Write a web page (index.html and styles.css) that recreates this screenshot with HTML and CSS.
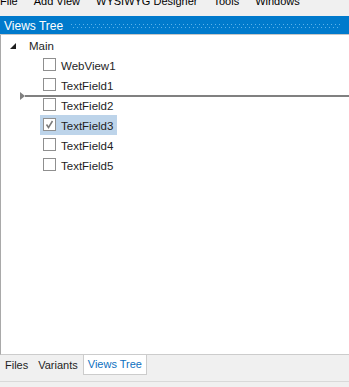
FILE: index.html
```html
<!DOCTYPE html>
<html lang="en">
<head>
    <meta charset="UTF-8">
    <title>Views Tree</title>
    <link rel="stylesheet" href="styles.css">
</head>
<body>
    <div class="menubar">
        <div class="menu-items">
            <span>File</span>
            <span>Add View</span>
            <span>WYSIWYG Designer</span>
            <span>Tools</span>
            <span>Windows</span>
        </div>
    </div>

    <div class="panel-title">
        <span class="title-text">Views Tree</span>
        <svg class="grip" height="5">
            <defs>
                <pattern id="dots" width="4" height="5" patternUnits="userSpaceOnUse">
                    <rect x="1" y="0" width="1" height="1" fill="#5fb3ea"/>
                    <rect x="3" y="3" width="1" height="1" fill="#5fb3ea"/>
                </pattern>
            </defs>
            <rect width="100%" height="5" fill="url(#dots)"/>
        </svg>
    </div>

    <div class="tree">
        <div class="row root">
            <span class="expander"></span>
            <span class="label">Main</span>
        </div>
        <div class="row child"><span class="item"><span class="check"></span><span class="label">WebView1</span></span></div>
        <div class="row child"><span class="item"><span class="check"></span><span class="label">TextField1</span></span></div>
        <div class="row child"><span class="item"><span class="check"></span><span class="label">TextField2</span></span></div>
        <div class="row child">
            <span class="item selected">
                <span class="check">
                    <svg width="11" height="11" viewBox="0 0 11 11"><path d="M2.5 5.5 L4.5 8.5 L8.5 2" fill="none" stroke="#7a7a7a" stroke-width="1.5"/></svg>
                </span>
                <span class="label">TextField3</span>
            </span>
        </div>
        <div class="row child"><span class="item"><span class="check"></span><span class="label">TextField4</span></span></div>
        <div class="row child"><span class="item"><span class="check"></span><span class="label">TextField5</span></span></div>

        <!-- drop indicator while dragging -->
        <div class="drop-line"></div>
    </div>

    <div class="tabs">
        <span class="tab">Files</span>
        <span class="tab">Variants</span>
        <span class="tab active">Views Tree</span>
    </div>
    <div class="statusline"></div>
</body>
</html>
```

FILE: styles.css
```css
html, body {
    margin: 0;
    padding: 0;
}
body {
    width: 349px;
    height: 387px;
    overflow: hidden;
    display: flex;
    flex-direction: column;
    background-color: #f0f0f0;
    font-family: 'Liberation Sans', Arial, sans-serif;
    font-size: 11.5px;
    color: #1e1e1e;
}
.menubar {
    height: 16px;
    overflow: hidden;
    flex-shrink: 0;
}
.menu-items {
    display: flex;
    gap: 16px;
    margin-top: -6px;
    line-height: 15px;
    font-size: 11px;
    color: #000;
}
.panel-title {
    height: 18px;
    flex-shrink: 0;
    display: flex;
    align-items: center;
    background-color: #007acc;
    border-bottom: 1px solid #c6c6c6;
    color: #fff;
    padding-left: 4px;
}
.title-text {
    font-size: 12px;
    line-height: 18px;
    padding-top: 1px;
}
.grip {
    flex: 1;
    margin: 2px 8px 0 7px;
}
.tree {
    flex: 1;
    position: relative;
    background-color: #fff;
    border-left: 1px solid #a9a9a9;
    border-bottom: 1px solid #cccccc;
}
.row {
    height: 20px;
    display: flex;
    align-items: center;
}
.root {
    padding-left: 9px;
}
.expander {
    width: 0;
    height: 0;
    border-style: solid;
    border-width: 0 0 6px 6px;
    border-color: transparent transparent #1e1e1e transparent;
    margin-right: 13px;
    margin-top: 1px;
}
.child {
    padding-left: 39px;
}
.item {
    height: 20px;
    display: inline-flex;
    align-items: center;
    padding: 0 4px 0 3px;
}
.item.selected {
    background-color: #bdd4ea;
}
.check {
    width: 11px;
    height: 11px;
    border: 1px solid #8f8f8f;
    background-color: #fff;
    margin-right: 5px;
    margin-top: -1px;
    display: flex;
}
.label {
    line-height: 20px;
    padding-top: 1px;
}
.drop-line {
    position: absolute;
    left: 24px;
    right: 0;
    top: 60px;
    height: 2px;
    background-color: #808080;
}
.drop-line::before {
    content: '';
    position: absolute;
    left: -5px;
    top: -3px;
    border-style: solid;
    border-width: 4px 0 4px 5px;
    border-color: transparent transparent transparent #808080;
}
.tabs {
    height: 20px;
    flex-shrink: 0;
    display: flex;
    font-size: 11px;
}
.tab {
    padding: 0 5px;
    line-height: 20px;
    color: #1e1e1e;
}
.tab.active {
    background-color: #fff;
    color: #0e70c0;
    padding: 0 4px;
    border: 1px solid #cccccc;
    border-top: none;
    margin-top: -1px;
    line-height: 20px;
}
.statusline {
    margin-top: 6px;
    height: 5px;
    border-top: 1px solid #d9d9d9;
    flex-shrink: 0;
}
```
